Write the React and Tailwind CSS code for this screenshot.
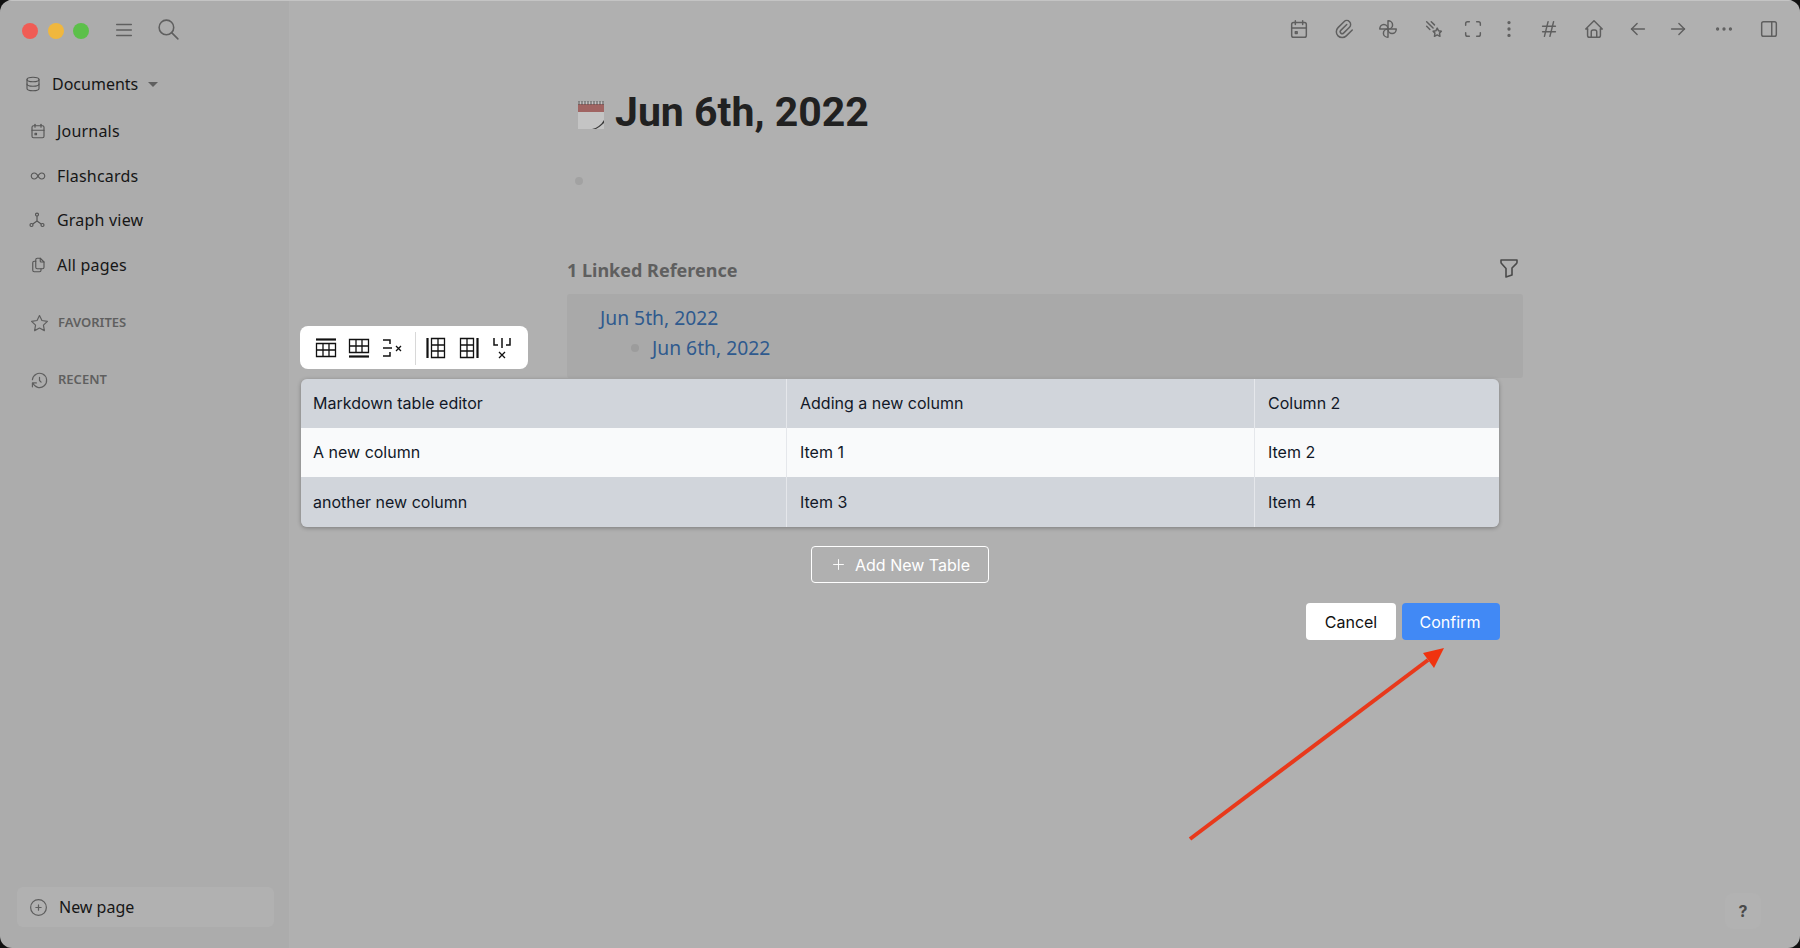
import React from 'react';
import {
  TbMenu2, TbSearch, TbDatabase, TbCalendarEvent, TbInfinity, TbFiles, TbStar, TbHistory, TbCirclePlus,
  TbPaperclip, TbWindmill, TbComet, TbMaximize, TbDotsVertical, TbHash, TbHome, TbArrowLeft, TbArrowRight,
  TbDots, TbLayoutSidebarRight, TbFilter, TbPlus,
} from 'react-icons/tb';

const plex = "font-['Noto_Sans',sans-serif]";

function GraphIcon() {
  return (
    <svg viewBox="0 0 16 16" className="w-[16px] h-[16px]" fill="none" stroke="currentColor" strokeWidth="1.2">
      <circle cx="8" cy="2.6" r="1.5" />
      <circle cx="2.5" cy="13" r="1.5" />
      <circle cx="13.5" cy="13" r="1.5" />
      <path d="M8 4.2V9L3.8 12M8 9l4.2 3" />
    </svg>
  );
}

function NavItem({ icon, label }) {
  return (
    <div className="h-[44.5px] flex items-center pl-[29px]">
      <span className="w-[28px] text-[#555]">{icon}</span>
      <span className="text-[16px] tracking-[0.2px] text-[#161616]">{label}</span>
    </div>
  );
}

function Sidebar() {
  return (
    <aside className={`w-[290px] shrink-0 h-full bg-[#acacac] border-r border-[#b1b1b1] flex flex-col ${plex}`}>
      <div className="h-[61px] flex items-center pl-[22px]">
        <div className="flex gap-[9.5px]">
          <span className="w-[16px] h-[16px] rounded-full bg-[#f05c55]" />
          <span className="w-[16px] h-[16px] rounded-full bg-[#f0b73e]" />
          <span className="w-[16px] h-[16px] rounded-full bg-[#5cc04a]" />
        </div>
        <TbMenu2 size={22} strokeWidth={1.5} className="ml-[24px] -mt-[2px] text-[#5f5f5f]" />
        <TbSearch size={25} strokeWidth={1.5} className="ml-[21px] -mt-[3px] text-[#5f5f5f]" />
      </div>
      <div className="mt-[1px] h-[44px] flex items-center pl-[24px]">
        <TbDatabase size={18} strokeWidth={1.5} className="text-[#555]" />
        <span className="ml-[10px] text-[16px] text-[#161616]">Documents</span>
        <span className="ml-[10px] w-0 h-0 border-x-[5px] border-x-transparent border-t-[5px] border-t-[#5f5f5f]" />
      </div>
      <div className="mt-[3px] flex flex-col">
        <NavItem icon={<TbCalendarEvent size={18} strokeWidth={1.5} />} label="Journals" />
        <NavItem icon={<TbInfinity size={18} strokeWidth={1.5} />} label="Flashcards" />
        <NavItem icon={<GraphIcon />} label="Graph view" />
        <NavItem icon={<TbFiles size={18} strokeWidth={1.5} />} label="All pages" />
      </div>
      <div className="mt-[21px] h-[30px] flex items-center pl-[30px] text-[#5f5f5f]">
        <TbStar size={19} strokeWidth={1.5} />
        <span className="ml-[9px] text-[13px] font-semibold">FAVORITES</span>
      </div>
      <div className="mt-[27px] h-[30px] flex items-center pl-[30px] text-[#5f5f5f]">
        <TbHistory size={19} strokeWidth={1.5} />
        <span className="ml-[9px] text-[13px] font-semibold">RECENT</span>
      </div>
      <div className="mt-auto mb-[21px] ml-[17px] mr-[15px] h-[40px] rounded-[6px] bg-[#b1b1b1] flex items-center pl-[11px]">
        <TbCirclePlus size={21} strokeWidth={1.4} className="text-[#5f5f5f]" />
        <span className="ml-[10px] text-[16px] text-[#161616]">New page</span>
      </div>
    </aside>
  );
}

function TopBar() {
  const icons = [
    [TbCalendarEvent, 1299], [TbPaperclip, 1344], [TbWindmill, 1388], [TbComet, 1434], [TbMaximize, 1473],
    [TbDotsVertical, 1509], [TbHash, 1549], [TbHome, 1594], [TbArrowLeft, 1638], [TbArrowRight, 1678],
    [TbDots, 1724], [TbLayoutSidebarRight, 1769],
  ];
  return (
    <div className="h-[58px] flex items-center justify-end pr-[20px] text-[#5f5f5f]">
      <div className="flex items-center">
        {icons.map(([Icon, x], i) => (
          <span key={x} className="w-[22px] h-[22px] flex items-center justify-center" style={{ marginLeft: i ? x - icons[i - 1][1] - 22 : 0 }}>
            <Icon size={22} strokeWidth={1.6} />
          </span>
        ))}
      </div>
    </div>
  );
}

function MainPage() {
  return (
    <main className="flex-1 h-full bg-[#b0b0b0] flex flex-col">
      <TopBar />
      <div className="w-[956px] mx-auto">
        <div className="mt-[26px] h-[56px] flex items-center pl-[10px]">
          <svg viewBox="0 0 28 30" className="w-[28px] h-[30px] mt-[5px]">
            <rect x="1" y="2" width="26" height="27" fill="#c4c4c4" />
            <rect x="1" y="4" width="26" height="8" fill="#a06462" />
            <path d="M2 1v4M5 1v4M8 1v4M11 1v4M14 1v4M17 1v4M20 1v4M23 1v4M26 1v4" stroke="#555" strokeWidth="1" />
            <path d="M15 29c5-1 9-4 12-9v3c-3 3-6 5-8 6z" fill="#3a3a3a" />
          </svg>
          <h1 className="ml-[10px] text-[41px] leading-[56px] font-bold text-[#212121] font-['Roboto',sans-serif]">Jun 6th, 2022</h1>
        </div>
        <div className="mt-[37px] ml-[8px] w-[8px] h-[8px] rounded-full bg-[#a2a2a2]" />
        <div className="mt-[72px] h-[26px] flex items-center justify-between pr-[2px]">
          <span className={`text-[18px] font-bold text-[#5f5f5f] ${plex}`}>1 Linked Reference</span>
          <TbFilter size={24} strokeWidth={1.6} className="text-[#4a4a4a] -mt-[5px]" />
        </div>
        <div className={`mt-[11px] h-[84px] bg-[#a9a9a9] rounded-[3px] pl-[33px] pt-[9px] text-[19.3px] leading-[30px] text-[#2f5a8e] ${plex}`}>
          <div>Jun 5th, 2022</div>
          <div className="flex items-center">
            <span className="ml-[31px] w-[8px] h-[8px] rounded-full bg-[#9c9c9c]" />
            <span className="ml-[13px]">Jun 6th, 2022</span>
          </div>
        </div>
      </div>
    </main>
  );
}

function ToolIcon({ children, width = 24 }) {
  return (
    <svg viewBox={`0 0 ${width} 24`} className="h-[24px]" style={{ width }} fill="none" stroke="#111" strokeWidth="1.3">
      {children}
    </svg>
  );
}

function TableToolbar() {
  return (
    <div className="ml-[300px] w-[228px] h-[43px] bg-white rounded-[8px] flex items-center pl-[14px] pt-[1px]">
      <div className="flex gap-[9px]">
        <ToolIcon width="24">
          <path d="M2 3.5h20" strokeWidth="2.2" />
          <path d="M2.5 7.5h19v13h-19zM2.5 14h19M9 7.5v13M15 7.5v13" />
        </ToolIcon>
        <ToolIcon width="24">
          <path d="M2 20.5h20" strokeWidth="2.2" />
          <path d="M2.5 3.5h19v13h-19zM2.5 10h19M9 3.5v13M15 3.5v13" />
        </ToolIcon>
        <ToolIcon width="24">
          <path d="M3 4h7v4M3 20h7v-4M3 12h9" strokeWidth="1.5" />
          <path d="M16 10l5 5M21 10l-5 5" />
        </ToolIcon>
      </div>
      <span className="ml-[11px] mr-[8px] w-px h-[33px] bg-[#d8d8d8]" />
      <div className="flex gap-[9px]">
        <ToolIcon width="24">
          <path d="M3.5 2v20" strokeWidth="2.2" />
          <path d="M7.5 2.5h13v19h-13zM14 2.5v19M7.5 9h13M7.5 15h13" />
        </ToolIcon>
        <ToolIcon width="24">
          <path d="M20.5 2v20" strokeWidth="2.2" />
          <path d="M3.5 2.5h13v19h-13zM10 2.5v19M3.5 9h13M3.5 15h13" />
        </ToolIcon>
        <ToolIcon width="24">
          <path d="M4 2v7h4M20 2v7h-4M12 2v10" strokeWidth="1.5" />
          <path d="M9 16l6 6M15 16l-6 6" />
        </ToolIcon>
      </div>
    </div>
  );
}

function Cell({ children, width, first, last }) {
  return (
    <div className={`flex items-center ${first ? 'pl-[12px]' : 'pl-[13px]'} pb-[1px] text-[16px] text-[#111827] ${last ? '' : 'border-r border-[#e5e7eb]'}`} style={{ width }}>
      {children}
    </div>
  );
}

function Row({ cells, white, height }) {
  const widths = [486, 468, 244];
  return (
    <div className={`flex ${white ? 'bg-[#f9fafb]' : 'bg-[#d1d5db]'}`} style={{ height }}>
      {cells.map((c, i) => <Cell key={c} width={widths[i]} first={i === 0} last={i === 2}>{c}</Cell>)}
    </div>
  );
}

function TableEditor() {
  return (
    <div className="absolute inset-0 pt-[326px] font-['Inter',sans-serif]">
      <TableToolbar />
      <div className="mt-[10px] ml-[301px] w-[1198px] rounded-[6px] overflow-hidden shadow-[0_1px_4px_rgba(0,0,0,0.3)]">
        <Row cells={['Markdown table editor', 'Adding a new column', 'Column 2']} height={49} />
        <Row cells={['A new column', 'Item 1', 'Item 2']} white height={49} />
        <Row cells={['another new column', 'Item 3', 'Item 4']} height={50} />
      </div>
      <div className="mt-[19px] ml-[811px] w-[178px] h-[37px] border border-white rounded-[4px] flex items-center justify-center text-white text-[16px]">
        <TbPlus size={17} strokeWidth={1.3} className="mr-[8px]" />
        Add New Table
      </div>
      <div className="mt-[20px] ml-[1306px] flex gap-[6px] text-[16px]">
        <div className="w-[90px] h-[37px] bg-white rounded-[4px] flex items-center justify-center text-[#111]">Cancel</div>
        <div className="w-[98px] h-[37px] bg-[#4189f5] rounded-[4px] flex items-center justify-center pr-[2px] text-white">Confirm</div>
      </div>
    </div>
  );
}

export default function App() {
  return (
    <div className="w-[1800px] h-[948px] bg-[#111] overflow-hidden">
      <div className="relative w-full h-full rounded-[12px] overflow-hidden flex">
        <Sidebar />
        <MainPage />
        <TableEditor />
        {/* top edge highlight of the window */}
        <div className="absolute inset-x-0 top-0 h-px bg-[#c4c4c4]" />
        {/* annotation arrow */}
        <svg className="absolute left-[1180px] top-[640px] pointer-events-none" width="280" height="210" viewBox="0 0 280 210" fill="none">
          <path d="M10 199L248 20" stroke="#e8391b" strokeWidth="4" />
          <path d="M264 8L243 13L254 28Z" fill="#f0330f" />
        </svg>
        <div className="absolute left-[1725px] top-[893px] w-[36px] h-[36px] rounded-[8px] bg-[#b2b2b2] flex items-center justify-center text-[16px] font-bold text-[#4a4a4a] font-['Inter',sans-serif]">?</div>
      </div>
    </div>
  );
}
